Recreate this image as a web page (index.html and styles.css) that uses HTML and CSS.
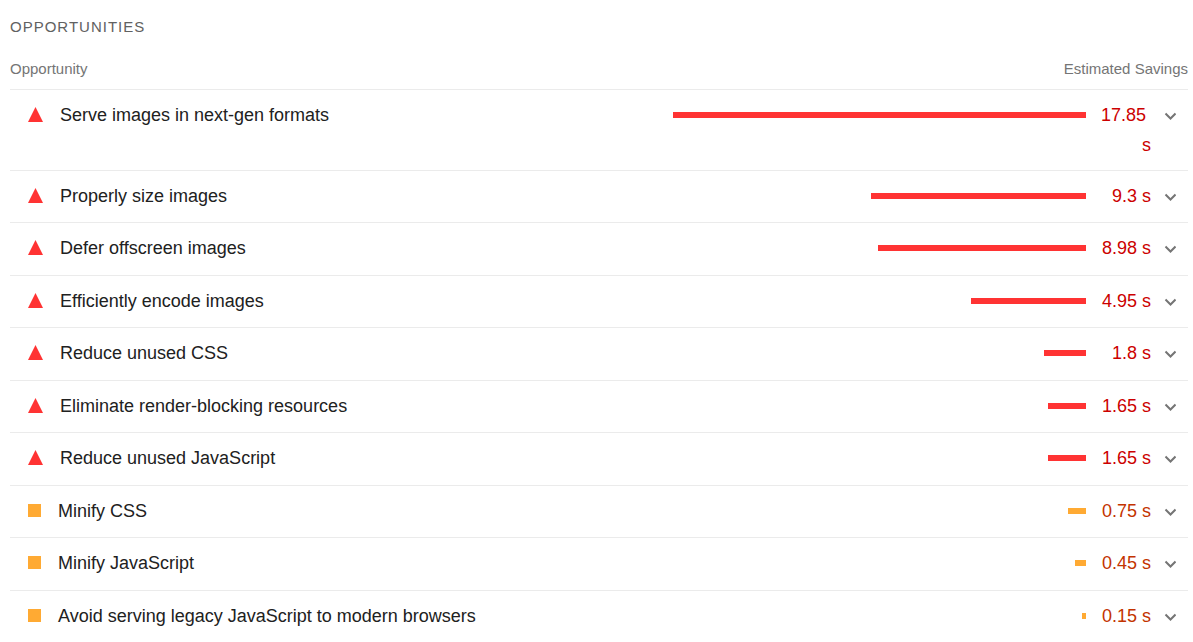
FILE: index.html
```html
<!DOCTYPE html>
<html lang="en">

<head>
    <meta charset="UTF-8">
    <meta name="viewport" content="width=device-width, initial-scale=1.0">
    <title>Opportunities</title>
    <link rel="stylesheet" href="styles.css">
</head>

<body>
    <svg class="defs" aria-hidden="true">
        <symbol id="chevron" viewBox="0 0 12 8">
            <path d="M1.5 1.5 L6.5 6.5 L11.5 1.5" fill="none" stroke="#757575" stroke-width="2" />
        </symbol>
        <symbol id="triangle" viewBox="0 0 15 15">
            <path d="M7.5 0 L15 15 H0 Z" fill="#ff3333" />
        </symbol>
    </svg>

    <main class="group">
        <h1 class="group-title">Opportunities</h1>
        <div class="columns">
            <span>Opportunity</span>
            <span>Estimated Savings</span>
        </div>

        <details class="audit fail">
            <summary>
                <svg class="icon"><use href="#triangle" /></svg>
                <span class="title">Serve images in next-gen formats</span>
                <span class="track"><span class="bar" style="width: 100%"></span></span>
                <span class="savings">17.85&nbsp;<wbr>s</span>
                <svg class="chevron"><use href="#chevron" /></svg>
            </summary>
        </details>
        <details class="audit fail">
            <summary>
                <svg class="icon"><use href="#triangle" /></svg>
                <span class="title">Properly size images</span>
                <span class="track"><span class="bar" style="width: 52.1%"></span></span>
                <span class="savings">9.3 s</span>
                <svg class="chevron"><use href="#chevron" /></svg>
            </summary>
        </details>
        <details class="audit fail">
            <summary>
                <svg class="icon"><use href="#triangle" /></svg>
                <span class="title">Defer offscreen images</span>
                <span class="track"><span class="bar" style="width: 50.3%"></span></span>
                <span class="savings">8.98 s</span>
                <svg class="chevron"><use href="#chevron" /></svg>
            </summary>
        </details>
        <details class="audit fail">
            <summary>
                <svg class="icon"><use href="#triangle" /></svg>
                <span class="title">Efficiently encode images</span>
                <span class="track"><span class="bar" style="width: 27.8%"></span></span>
                <span class="savings">4.95 s</span>
                <svg class="chevron"><use href="#chevron" /></svg>
            </summary>
        </details>
        <details class="audit fail">
            <summary>
                <svg class="icon"><use href="#triangle" /></svg>
                <span class="title">Reduce unused CSS</span>
                <span class="track"><span class="bar" style="width: 10.1%"></span></span>
                <span class="savings">1.8 s</span>
                <svg class="chevron"><use href="#chevron" /></svg>
            </summary>
        </details>
        <details class="audit fail">
            <summary>
                <svg class="icon"><use href="#triangle" /></svg>
                <span class="title">Eliminate render-blocking resources</span>
                <span class="track"><span class="bar" style="width: 9.3%"></span></span>
                <span class="savings">1.65 s</span>
                <svg class="chevron"><use href="#chevron" /></svg>
            </summary>
        </details>
        <details class="audit fail">
            <summary>
                <svg class="icon"><use href="#triangle" /></svg>
                <span class="title">Reduce unused JavaScript</span>
                <span class="track"><span class="bar" style="width: 9.3%"></span></span>
                <span class="savings">1.65 s</span>
                <svg class="chevron"><use href="#chevron" /></svg>
            </summary>
        </details>
        <details class="audit average">
            <summary>
                <span class="icon"></span>
                <span class="title">Minify CSS</span>
                <span class="track"><span class="bar" style="width: 4.3%"></span></span>
                <span class="savings">0.75 s</span>
                <svg class="chevron"><use href="#chevron" /></svg>
            </summary>
        </details>
        <details class="audit average">
            <summary>
                <span class="icon"></span>
                <span class="title">Minify JavaScript</span>
                <span class="track"><span class="bar" style="width: 2.6%"></span></span>
                <span class="savings">0.45 s</span>
                <svg class="chevron"><use href="#chevron" /></svg>
            </summary>
        </details>
        <details class="audit average">
            <summary>
                <span class="icon"></span>
                <span class="title">Avoid serving legacy JavaScript to modern browsers</span>
                <span class="track"><span class="bar" style="width: 0.9%"></span></span>
                <span class="savings">0.15 s</span>
                <svg class="chevron"><use href="#chevron" /></svg>
            </summary>
        </details>
    </main>
</body>

</html>
```
FILE: styles.css
```css
* {
    box-sizing: border-box;
}

body {
    margin: 0;
    background: #ffffff;
    color: #212121;
    font-family: "Liberation Sans", Arial, sans-serif;
    font-size: 18px;
    line-height: 30px;
}

.defs {
    display: none;
}

.group {
    padding: 12px 5px 0 10px;
}

.group-title {
    margin: 0 0 12px;
    color: #616161;
    font-size: 15px;
    font-weight: normal;
    letter-spacing: 1px;
    text-transform: uppercase;
}

.columns {
    display: flex;
    justify-content: space-between;
    height: 35px;
    color: #757575;
    font-size: 15px;
}

.audit {
    border-top: 1px solid #ebebeb;
}

.audit summary {
    display: flex;
    align-items: flex-start;
    min-height: 51px;
    padding: 10px 12px 10px 18px;
    list-style: none;
    cursor: pointer;
}

.audit:nth-of-type(odd) summary {
    min-height: 52px;
}

.icon {
    flex: none;
    width: 15px;
    height: 15px;
    margin: 7px 17px 0 0;
}

.title {
    flex: 1;
}

/* the longest bar fills the whole track */
.track {
    display: flex;
    flex: none;
    justify-content: flex-end;
    width: 36%;
    margin: 12px 13px 0 0;
}

.bar {
    height: 6px;
}

.savings {
    flex: none;
    width: 52px;
    text-align: right;
}

.chevron {
    flex: none;
    width: 12px;
    height: 8px;
    margin: 12px 0 0 13px;
}

.fail .bar {
    background: #ff3333;
}

.fail .savings {
    color: #cc0000;
}

.average .icon {
    width: 13px;
    height: 13px;
    margin-top: 8px;
    background: #ffaa33;
}

.average .bar {
    background: #ffaa33;
}

.average .savings {
    color: #c33300;
}
```
